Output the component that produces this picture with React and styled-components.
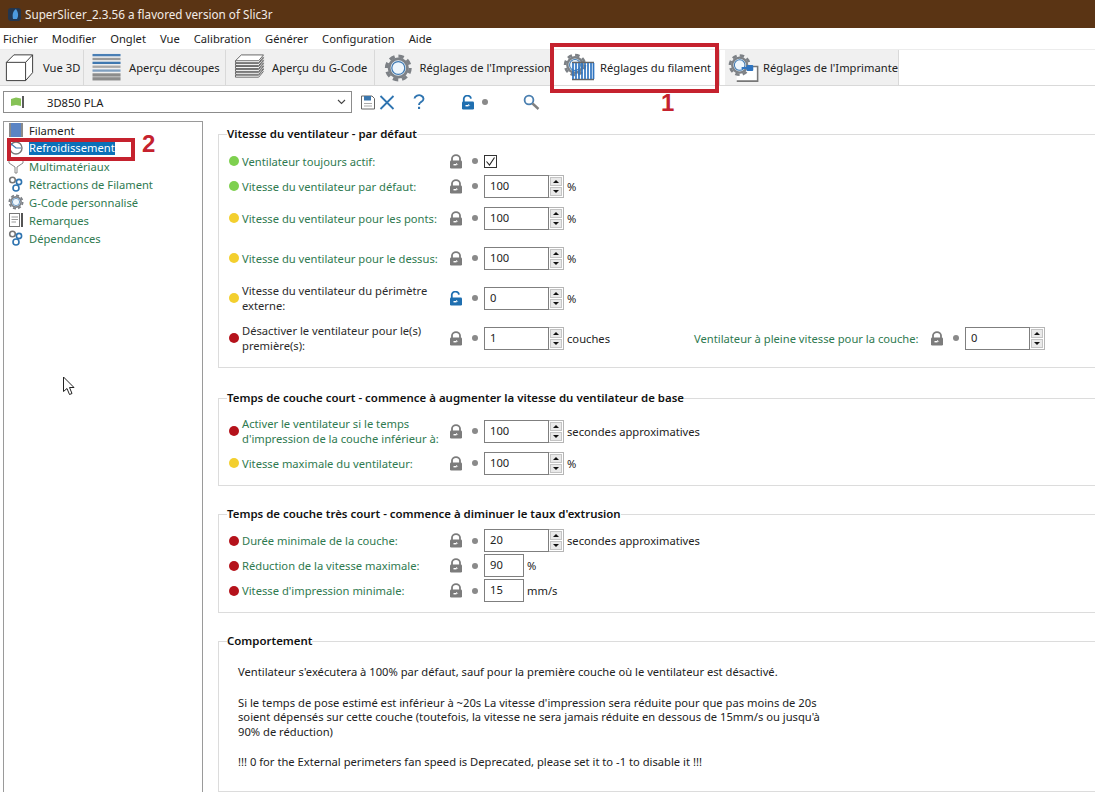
import React from 'react';
import styled, { createGlobalStyle } from 'styled-components';

const GlobalStyle = createGlobalStyle`
  html, body { margin: 0; padding: 0; background: #fff; }
  body { font-family: "Noto Sans", "Open Sans", sans-serif; font-size: 11.2px; color: #1a1a1a; }
`;

const Page = styled.div`
  position: relative;
  width: 1095px;
  height: 792px;
  overflow: hidden;
  background: #fff;
`;

const TitleBar = styled.div`
  height: 28px;
  display: flex;
  align-items: center;
  gap: 3px;
  padding-left: 7px;
  background: #5a3414;
  color: #f3ece6;
  font-size: 11.7px;
`;

const MenuBar = styled.div`
  height: 20px;
  display: flex;
  align-items: center;
  gap: 14px;
  padding-left: 3px;
  color: #222;
`;

const TabBar = styled.div`
  height: 35px;
  margin-top: 1px;
  display: flex;
  border-top: 1px solid #ececec;
  border-bottom: 1px solid #d9d9d9;
`;

const Tab = styled.div`
  width: ${(p) => p.$w}px;
  display: flex;
  align-items: center;
  gap: ${(p) => p.$gap || 8}px;
  padding-left: ${(p) => p.$pad || 4}px;
  box-sizing: border-box;
  background: ${(p) => (p.$active ? '#fff' : '#f0f0f0')};
  border-right: 1px solid #d9d9d9;
  white-space: nowrap;
  color: #222;
`;

const TabSpacer = styled.div`
  width: 5px;
  background: #fff;
`;

const PresetBar = styled.div`
  height: 22px;
  margin: 5px 0 8px 3px;
  display: flex;
  align-items: center;
`;

const Combo = styled.div`
  width: 349px;
  height: 22px;
  box-sizing: border-box;
  border: 1px solid #8c8c8c;
  display: flex;
  align-items: center;
  padding: 0 5px 0 6px;
`;

const ComboText = styled.span`
  flex: 1;
  margin-left: 21px;
`;

const BarIcon = styled.span`
  display: flex;
  margin-left: ${(p) => p.$ml || 0}px;
`;

const Body = styled.div`
  display: flex;
  height: 671px;
`;

const Tree = styled.div`
  width: 200px;
  margin-left: 3px;
  box-sizing: border-box;
  border: 1px solid #9a9a9a;
  border-bottom: none;
  flex-shrink: 0;
`;

const TreeItem = styled.div`
  height: 18px;
  box-sizing: border-box;
  padding: 0 0 2px 4px;
  display: flex;
  align-items: center;
  color: ${(p) => (p.$plain ? '#222' : '#2f7a50')};
`;

const TreeIcon = styled.span`
  width: 21px;
  display: flex;
  flex-shrink: 0;
`;

const Selected = styled.span`
  background: #0b70b8;
  color: #fff;
  line-height: 14px;
`;

const Main = styled.div`
  flex: 1;
  padding: 5px 0 0 15px;
  min-width: 0;
`;

const Group = styled.fieldset`
  margin: 0 0 ${(p) => p.$mb || 0}px;
  padding: ${(p) => p.$pt || 6}px 0 ${(p) => p.$pb || 8}px 10px;
  border: 1px solid #dcdcdc;
  border-right: none;
  min-width: 0;
`;

const Legend = styled.legend`
  font-weight: 600;
  font-size: 11.45px;
  color: #111;
  padding: 0;
  margin-left: -2px;
  line-height: 16px;
`;

const Row = styled.div`
  height: ${(p) => p.$h}px;
  display: flex;
  align-items: center;
`;

const Bullet = styled.span`
  width: 10px;
  height: 10px;
  border-radius: 50%;
  background: ${(p) => p.$c};
  flex-shrink: 0;
  margin-right: 3px;
`;

const Label = styled.span`
  width: ${(p) => p.$w || 207}px;
  flex-shrink: 0;
  color: ${(p) => (p.$dark ? '#2b2b2b' : '#2f7a50')};
  line-height: 15px;
  white-space: nowrap;
`;

const Dot = styled.span`
  width: 6px;
  height: 6px;
  border-radius: 50%;
  background: #8a8a8a;
  margin: 0 6px 0 ${(p) => p.$ml || 9}px;
  flex-shrink: 0;
`;

const Field = styled.input`
  width: ${(p) => p.$w || 65}px;
  height: 23px;
  box-sizing: border-box;
  border: 1px solid #7f7f7f;
  padding: 0 0 2px 5px;
  font: inherit;
  color: #222;
  outline: none;
  background: #fff;
`;

const Spinner = styled.span`
  width: 15px;
  height: 23px;
  box-sizing: border-box;
  border: 1px solid #b5b5b5;
  border-left: none;
  padding: 1px;
  display: flex;
  flex-direction: column;
  gap: 1px;
  flex-shrink: 0;
`;

const SpinButton = styled.span`
  flex: 1;
  display: flex;
  align-items: center;
  justify-content: center;
  background: #e9e9e9;
  border: 1px solid #c4c4c4;
  &::before {
    content: '';
    border-left: 3px solid transparent;
    border-right: 3px solid transparent;
    ${(p) => (p.$down ? 'border-top: 3px solid #111;' : 'border-bottom: 3px solid #111;')}
  }
`;

const Unit = styled.span`
  margin-left: 3px;
  color: #222;
  width: ${(p) => p.$w || 'auto'};
  flex-shrink: 0;
`;

const CheckBox = styled.span`
  width: 13px;
  height: 13px;
  box-sizing: border-box;
  border: 1px solid #333;
  display: flex;
  align-items: center;
  justify-content: center;
`;

const Note = styled.div`
  padding: 10px 0 0 9px;
  line-height: 14.6px;
  color: #222;
  white-space: nowrap;
`;

const NoteBlock = styled.p`
  margin: 0 0 16px;
`;

const RedBox = styled.div`
  position: absolute;
  left: ${(p) => p.$x}px;
  top: ${(p) => p.$y}px;
  width: ${(p) => p.$w}px;
  height: ${(p) => p.$h}px;
  box-sizing: border-box;
  border: 4px solid #c5222e;
`;

const RedNumber = styled.div`
  position: absolute;
  left: ${(p) => p.$x}px;
  top: ${(p) => p.$y}px;
  color: #c5222e;
  font-family: "Liberation Sans", sans-serif;
  font-weight: 700;
  font-size: 24px;
  line-height: 24px;
`;

const Cursor = styled.svg`
  position: absolute;
  left: 62px;
  top: 376px;
`;

function AppLogo() {
  return (
    <svg width="15" height="15" viewBox="0 0 15 15">
      <rect x="1" y="1" width="13" height="13" rx="3" fill="#23364f" />
      <path d="M9 2 C6 4 5 7 6 12 L10 12 C12 8 11 5 9 2Z" fill="#4d9be0" />
    </svg>
  );
}

function CubeIcon() {
  return (
    <svg width="31" height="29" viewBox="0 0 31 31" fill="#fff" stroke="#333" strokeWidth="1">
      <path d="M1.5 10 L9.5 2 H29.5 V21 L22 29.5 H1.5Z" />
      <path d="M1.5 10 H22 V29.5 M22 10 L29.5 2" fill="none" />
    </svg>
  );
}

function SlicesIcon() {
  const bars = ['#4a7fb5', '#9a9a9a', '#3f78b0', '#a8a8a8', '#7f9fc0', '#8c8c8c', '#8c8c8c'];
  return (
    <svg width="30" height="29" viewBox="0 0 30 30">
      {bars.map((c, i) => (
        <rect key={i} x="0" y={1 + i * 4} width="29" height={i > 4 ? 3.4 : 2.4} fill={c} />
      ))}
    </svg>
  );
}

function LayersIcon() {
  return (
    <svg width="31" height="29" viewBox="0 0 31 30" fill="#fff" stroke="#555" strokeWidth="0.9">
      {[20, 17, 14, 11, 8, 5].map((y) => (
        <path key={y} d="M1 8 H25 L30 2 H7Z M1 8 V10 H25 L30 4" transform={`translate(0 ${y - 5})`} />
      ))}
    </svg>
  );
}

// gear body with chunky teeth and the pale blue ring in the middle
function GearShape({ transform }) {
  return (
    <g transform={transform}>
      <circle cx="15" cy="15" r="12.4" stroke="#7d8186" strokeWidth="3.4" strokeDasharray="5.7 4" fill="none" />
      <circle cx="15" cy="15" r="9.6" fill="#e6f2fb" stroke="#7d8186" strokeWidth="3" />
      <circle cx="15" cy="15" r="6.8" fill="#eef6fc" stroke="#3f78b0" strokeWidth="1.3" />
    </g>
  );
}

function Gear({ size = 30 }) {
  return (
    <svg width={size} height={size} viewBox="0 0 30 30">
      <GearShape />
    </svg>
  );
}

function FilamentGear() {
  return (
    <svg width="32" height="30" viewBox="0 0 32 30" fill="none">
      <GearShape transform="scale(0.8)" />
      <path d="M9 9.5 H31 M9 26.5 H31" stroke="#666" strokeWidth="1.6" />
      <g stroke="#2f74c0" strokeWidth="1.7">
        {[10, 13, 16, 19, 22, 25, 28, 30.5].map((x) => (
          <path key={x} d={`M${x} 10 V26`} />
        ))}
      </g>
    </svg>
  );
}

function PrinterGear() {
  return (
    <svg width="32" height="30" viewBox="0 0 32 30" fill="none">
      <path d="M9 13.5 H30.5 V28.5 H9" stroke="#777" strokeWidth="1.6" fill="#fff" />
      <GearShape transform="scale(0.8)" />
      <rect x="19" y="12" width="7" height="6" rx="1" fill="#2f74c0" />
      <path d="M14 15 H20" stroke="#2f74c0" strokeWidth="2" />
    </svg>
  );
}

function Lock({ open, size = 14 }) {
  const c = open ? '#1f6fb0' : '#7c7c7c';
  return (
    <svg width={size} height="15" viewBox="0 0 14 15" fill="none">
      <path d={open ? 'M2.8 7 V4.6 A3.6 3.4 0 0 1 10 3.6' : 'M3 7 V4.6 A4 3.4 0 0 1 11 4.6 V7'} stroke={c} strokeWidth="1.8" />
      <rect x="1" y="6.5" width="12" height="8" rx="1.2" fill={c} />
      <path d="M7 9 L9.4 10.5 H7 Z" fill="#fff" />
      <rect x="4.5" y="10" width="3" height="1.4" fill="#fff" />
    </svg>
  );
}

function Flag() {
  return (
    <svg width="16" height="14" viewBox="0 0 16 14">
      <path d="M1 4 L6 2.5 L11 3.5 V11 L6 10 L1 11Z" fill="#86c256" />
      <rect x="12" y="1" width="2" height="12" fill="#5b5b5b" />
    </svg>
  );
}

function SaveIcon() {
  return (
    <svg width="14" height="15" viewBox="0 0 14 15">
      <path d="M.5 1 H11 L13.5 3.5 V14 H.5Z" fill="#fff" stroke="#666" />
      <rect x="3" y="1" width="7" height="4.5" fill="#3a76ad" />
      <rect x="3" y="8" width="8" height="1" fill="#aaa" />
      <rect x="3" y="10.5" width="8" height="1" fill="#aaa" />
    </svg>
  );
}

function CloseIcon() {
  return (
    <svg width="16" height="15" viewBox="0 0 16 15">
      <path d="M1.5 1 L14.5 14 M14.5 1 L1.5 14" stroke="#2f74b0" strokeWidth="1.8" />
    </svg>
  );
}

function HelpIcon() {
  return (
    <svg width="12" height="16" viewBox="0 0 12 16" fill="none">
      <path d="M1.5 4.5 A4.5 3.6 0 1 1 8 8 C6.5 9 6 9.6 6 11" stroke="#2f74b0" strokeWidth="1.9" />
      <rect x="5" y="12.8" width="2.1" height="2.2" fill="#2f74b0" />
    </svg>
  );
}

function SearchIcon() {
  return (
    <svg width="17" height="16" viewBox="0 0 17 16" fill="none">
      <circle cx="6" cy="6" r="4.4" stroke="#4a7fb0" strokeWidth="1.8" />
      <path d="M9.5 9.5 L15.5 15" stroke="#808080" strokeWidth="2.4" />
    </svg>
  );
}

function FilamentSquare() {
  return (
    <svg width="16" height="16" viewBox="0 0 16 16">
      <rect x="1" y="1" width="14" height="14" fill="#5b84c4" />
      <rect x="1" y="1" width="2" height="14" fill="#8a8a8a" />
      <rect x="13" y="1" width="2" height="14" fill="#8a8a8a" />
    </svg>
  );
}

function CoolingIcon() {
  return (
    <svg width="16" height="16" viewBox="0 0 16 16" fill="none">
      <circle cx="8" cy="8" r="6" fill="#fff" stroke="#777" strokeWidth="1.4" />
      <path d="M2 3 L8 8 H13" stroke="#3f78b0" strokeWidth="1.2" />
    </svg>
  );
}

function MultiIcon() {
  return (
    <svg width="16" height="16" viewBox="0 0 16 16" fill="none" stroke="#888">
      <path d="M1 1 V5 L7 9 V15 H9 V9 L15 5 V1" />
    </svg>
  );
}

function RetractIcon() {
  return (
    <svg width="16" height="16" viewBox="0 0 16 16" fill="none" strokeWidth="1.6">
      <circle cx="4.5" cy="4" r="2.8" stroke="#777" />
      <circle cx="11" cy="6" r="2.6" stroke="#2f74b0" />
      <circle cx="8" cy="12" r="3" stroke="#2f74b0" />
    </svg>
  );
}

function NotesIcon() {
  return (
    <svg width="16" height="16" viewBox="0 0 16 16" fill="none">
      <rect x="1.5" y="1.5" width="10" height="13" stroke="#777" />
      <path d="M3.5 5 H10 M3.5 7.5 H10 M3.5 10 H8" stroke="#999" />
      <rect x="13" y="1" width="2" height="14" fill="#555" />
    </svg>
  );
}

const GREEN = '#7ed04f';
const YELLOW = '#f3cf2e';
const RED = '#b5121b';

function NumberField({ value }) {
  return (
    <>
      <Field defaultValue={value} readOnly />
      <Spinner>
        <SpinButton />
        <SpinButton $down />
      </Spinner>
    </>
  );
}

function Setting({ h, color, label, open, dark, children }) {
  return (
    <Row $h={h}>
      <Bullet $c={color} />
      <Label $dark={dark}>{label}</Label>
      <Lock open={open} />
      <Dot />
      {children}
    </Row>
  );
}

const treeItems = [
  { label: 'Filament', icon: <FilamentSquare />, plain: true },
  { label: 'Refroidissement', icon: <CoolingIcon />, selected: true },
  { label: 'Multimatériaux', icon: <MultiIcon /> },
  { label: 'Rétractions de Filament', icon: <RetractIcon /> },
  { label: 'G-Code personnalisé', icon: <Gear size={16} /> },
  { label: 'Remarques', icon: <NotesIcon /> },
  { label: 'Dépendances', icon: <RetractIcon /> },
];

export default function App() {
  return (
    <Page>
      <GlobalStyle />
      <TitleBar>
        <AppLogo />
        SuperSlicer_2.3.56 a flavored version of Slic3r
      </TitleBar>
      <MenuBar>
        {['Fichier', 'Modifier', 'Onglet', 'Vue', 'Calibration', 'Générer', 'Configuration', 'Aide'].map((m) => (
          <span key={m}>{m}</span>
        ))}
      </MenuBar>
      <TabBar>
        <Tab $w={84}><CubeIcon />Vue 3D</Tab>
        <Tab $w={142} $pad={8} $gap={7}><SlicesIcon />Aperçu découpes</Tab>
        <Tab $w={149} $pad={8} $gap={7}><LayersIcon />Aperçu du G-Code</Tab>
        <Tab $w={177} $pad={9} $gap={7}><Gear />Réglages de l'Impression</Tab>
        <Tab $w={168} $active $pad={11} $gap={5}><FilamentGear />Réglages du filament</Tab>
        <TabSpacer />
        <Tab $w={174} $pad={3} $gap={4}><PrinterGear />Réglages de l'Imprimante</Tab>
      </TabBar>
      <PresetBar>
        <Combo>
          <Flag />
          <ComboText>3D850 PLA</ComboText>
          <svg width="9" height="6" viewBox="0 0 9 6" fill="none">
            <path d="M1 1 L4.5 4.5 L8 1" stroke="#444" strokeWidth="1.1" />
          </svg>
        </Combo>
        <BarIcon $ml={9}><SaveIcon /></BarIcon>
        <BarIcon $ml={4}><CloseIcon /></BarIcon>
        <BarIcon $ml={18}><HelpIcon /></BarIcon>
        <BarIcon $ml={36}><Lock open /></BarIcon>
        <Dot $ml={7} />
        <BarIcon $ml={29}><SearchIcon /></BarIcon>
      </PresetBar>
      <Body>
        <Tree>
          {treeItems.map((item) => (
            <TreeItem key={item.label} $plain={item.plain}>
              <TreeIcon>{item.icon}</TreeIcon>
              {item.selected ? <Selected>{item.label}</Selected> : item.label}
            </TreeItem>
          ))}
        </Tree>
        <Main>
          <Group $pt={7} $mb={22}>
            <Legend>Vitesse du ventilateur - par défaut</Legend>
            <Setting h={24} color={GREEN} label="Ventilateur toujours actif:">
              <CheckBox>
                <svg width="11" height="11" viewBox="0 0 11 11" fill="none">
                  <path d="M1.5 5.5 L4.5 9 L9.5 1.5" stroke="#222" strokeWidth="1.1" />
                </svg>
              </CheckBox>
            </Setting>
            <Setting h={26} color={GREEN} label="Vitesse du ventilateur par défaut:">
              <NumberField value="100" /><Unit>%</Unit>
            </Setting>
            <Setting h={38} color={YELLOW} label="Vitesse du ventilateur pour les ponts:">
              <NumberField value="100" /><Unit>%</Unit>
            </Setting>
            <Setting h={42} color={YELLOW} label="Vitesse du ventilateur pour le dessus:">
              <NumberField value="100" /><Unit>%</Unit>
            </Setting>
            <Setting h={38} color={YELLOW} open dark label={<>Vitesse du ventilateur du périmètre<br />externe:</>}>
              <NumberField value="0" /><Unit>%</Unit>
            </Setting>
            <Row $h={42}>
              <Bullet $c={RED} />
              <Label $dark>Désactiver le ventilateur pour le(s)<br />première(s):</Label>
              <Lock />
              <Dot />
              <NumberField value="1" />
              <Unit $w="127px">couches</Unit>
              <Label $w={236}>Ventilateur à pleine vitesse pour la couche:</Label>
              <Lock />
              <Dot />
              <NumberField value="0" />
            </Row>
          </Group>
          <Group $pb={9} $mb={20}>
            <Legend>Temps de couche court - commence à augmenter la vitesse du ventilateur de base</Legend>
            <Setting h={38} color={RED} label={<>Activer le ventilateur si le temps<br />d'impression de la couche inférieur à:</>}>
              <NumberField value="100" /><Unit>secondes approximatives</Unit>
            </Setting>
            <Setting h={26} color={YELLOW} label="Vitesse maximale du ventilateur:">
              <NumberField value="100" /><Unit>%</Unit>
            </Setting>
          </Group>
          <Group $pb={9} $mb={20}>
            <Legend>Temps de couche très court - commence à diminuer le taux d'extrusion</Legend>
            <Setting h={25} color={RED} label="Durée minimale de la couche:">
              <NumberField value="20" /><Unit>secondes approximatives</Unit>
            </Setting>
            <Setting h={25} color={RED} label="Réduction de la vitesse maximale:">
              <Field $w={40} defaultValue="90" readOnly /><Unit>%</Unit>
            </Setting>
            <Setting h={25} color={RED} label="Vitesse d'impression minimale:">
              <Field $w={40} defaultValue="15" readOnly /><Unit>mm/s</Unit>
            </Setting>
          </Group>
          <Group $pb={5}>
            <Legend>Comportement</Legend>
            <Note>
              <NoteBlock>Ventilateur s'exécutera à 100% par défaut, sauf pour la première couche où le ventilateur est désactivé.</NoteBlock>
              <NoteBlock>
                Si le temps de pose estimé est inférieur à ~20s La vitesse d'impression sera réduite pour que pas moins de 20s<br />
                soient dépensés sur cette couche (toutefois, la vitesse ne sera jamais réduite en dessous de 15mm/s ou jusqu'à<br />
                90% de réduction)
              </NoteBlock>
              <NoteBlock>!!! 0 for the External perimeters fan speed is Deprecated, please set it to -1 to disable it !!!</NoteBlock>
            </Note>
          </Group>
        </Main>
      </Body>
      <RedBox $x={550} $y={43} $w={169} $h={50} />
      <RedNumber $x={661} $y={91}>1</RedNumber>
      <RedBox $x={7} $y={138} $w={128} $h={23} />
      <RedNumber $x={142} $y={132}>2</RedNumber>
      <Cursor width="13" height="20" viewBox="0 0 13 20">
        <path d="M1.5 1 V15.5 L5 12.5 L7.5 18.5 L10 17.5 L7.5 11.5 H12Z" fill="#fff" stroke="#222" />
      </Cursor>
    </Page>
  );
}
